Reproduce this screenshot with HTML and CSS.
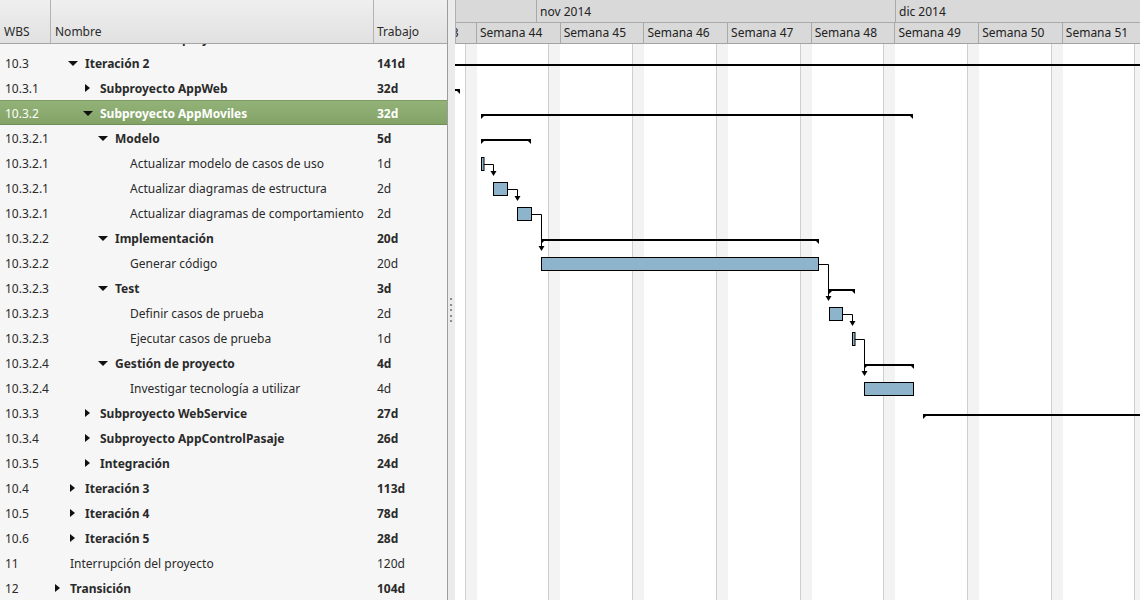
FILE: index.html
```html
<!DOCTYPE html>
<html lang="es">
<head>
<meta charset="utf-8">
<title>Gantt</title>
<link rel="stylesheet" href="styles.css">
</head>
<body>
<div class="app">
  <div class="tree">
    <div class="tree-head">
      <div class="th wbs">WBS</div>
      <div class="th name">Nombre</div>
      <div class="th work">Trabajo</div>
    </div>
    <div class="tree-body">
      <div class="rows">
        <div class="row bold"><span class="c-wbs">10.2.5</span><span class="c-name l3"><span class="tw"><i class="down"></i></span>Gestión de proyecto</span><span class="c-work">6d</span></div>
        <div class="row bold"><span class="c-wbs">10.3</span><span class="c-name l1"><span class="tw"><i class="down"></i></span>Iteración 2</span><span class="c-work">141d</span></div>
        <div class="row bold"><span class="c-wbs">10.3.1</span><span class="c-name l2"><span class="tw"><i class="right"></i></span>Subproyecto AppWeb</span><span class="c-work">32d</span></div>
        <div class="row bold sel"><span class="c-wbs">10.3.2</span><span class="c-name l2"><span class="tw"><i class="down"></i></span>Subproyecto AppMoviles</span><span class="c-work">32d</span></div>
        <div class="row bold"><span class="c-wbs">10.3.2.1</span><span class="c-name l3"><span class="tw"><i class="down"></i></span>Modelo</span><span class="c-work">5d</span></div>
        <div class="row"><span class="c-wbs">10.3.2.1</span><span class="c-name l4"><span class="tw"></span>Actualizar modelo de casos de uso</span><span class="c-work">1d</span></div>
        <div class="row"><span class="c-wbs">10.3.2.1</span><span class="c-name l4"><span class="tw"></span>Actualizar diagramas de estructura</span><span class="c-work">2d</span></div>
        <div class="row"><span class="c-wbs">10.3.2.1</span><span class="c-name l4"><span class="tw"></span>Actualizar diagramas de comportamiento</span><span class="c-work">2d</span></div>
        <div class="row bold"><span class="c-wbs">10.3.2.2</span><span class="c-name l3"><span class="tw"><i class="down"></i></span>Implementación</span><span class="c-work">20d</span></div>
        <div class="row"><span class="c-wbs">10.3.2.2</span><span class="c-name l4"><span class="tw"></span>Generar código</span><span class="c-work">20d</span></div>
        <div class="row bold"><span class="c-wbs">10.3.2.3</span><span class="c-name l3"><span class="tw"><i class="down"></i></span>Test</span><span class="c-work">3d</span></div>
        <div class="row"><span class="c-wbs">10.3.2.3</span><span class="c-name l4"><span class="tw"></span>Definir casos de prueba</span><span class="c-work">2d</span></div>
        <div class="row"><span class="c-wbs">10.3.2.3</span><span class="c-name l4"><span class="tw"></span>Ejecutar casos de prueba</span><span class="c-work">1d</span></div>
        <div class="row bold"><span class="c-wbs">10.3.2.4</span><span class="c-name l3"><span class="tw"><i class="down"></i></span>Gestión de proyecto</span><span class="c-work">4d</span></div>
        <div class="row"><span class="c-wbs">10.3.2.4</span><span class="c-name l4"><span class="tw"></span>Investigar tecnología a utilizar</span><span class="c-work">4d</span></div>
        <div class="row bold"><span class="c-wbs">10.3.3</span><span class="c-name l2"><span class="tw"><i class="right"></i></span>Subproyecto WebService</span><span class="c-work">27d</span></div>
        <div class="row bold"><span class="c-wbs">10.3.4</span><span class="c-name l2"><span class="tw"><i class="right"></i></span>Subproyecto AppControlPasaje</span><span class="c-work">26d</span></div>
        <div class="row bold"><span class="c-wbs">10.3.5</span><span class="c-name l2"><span class="tw"><i class="right"></i></span>Integración</span><span class="c-work">24d</span></div>
        <div class="row bold"><span class="c-wbs">10.4</span><span class="c-name l1"><span class="tw"><i class="right"></i></span>Iteración 3</span><span class="c-work">113d</span></div>
        <div class="row bold"><span class="c-wbs">10.5</span><span class="c-name l1"><span class="tw"><i class="right"></i></span>Iteración 4</span><span class="c-work">78d</span></div>
        <div class="row bold"><span class="c-wbs">10.6</span><span class="c-name l1"><span class="tw"><i class="right"></i></span>Iteración 5</span><span class="c-work">28d</span></div>
        <div class="row"><span class="c-wbs">11</span><span class="c-name l0"><span class="tw"></span>Interrupción del proyecto</span><span class="c-work">120d</span></div>
        <div class="row bold"><span class="c-wbs">12</span><span class="c-name l0"><span class="tw"><i class="right"></i></span>Transición</span><span class="c-work">104d</span></div>
      </div>
    </div>
  </div>
  <div class="splitter">
    <span class="dot"></span><span class="dot"></span><span class="dot"></span><span class="dot"></span><span class="dot"></span>
  </div>
  <div class="gantt">
    <div class="g-head">
      <div class="g-months">
        <div class="g-month m-oct"></div>
        <div class="g-month m-nov">nov 2014</div>
        <div class="g-month m-dic">dic 2014</div>
      </div>
      <div class="g-weeks">
        <div class="g-week">Semana 43</div>
        <div class="g-week">Semana 44</div>
        <div class="g-week">Semana 45</div>
        <div class="g-week">Semana 46</div>
        <div class="g-week">Semana 47</div>
        <div class="g-week">Semana 48</div>
        <div class="g-week">Semana 49</div>
        <div class="g-week">Semana 50</div>
        <div class="g-week">Semana 51</div>
      </div>
    </div>
    <svg class="g-body" width="685" height="556" viewBox="455 44 685 556" xmlns="http://www.w3.org/2000/svg">
      <g class="nonwork">
        <rect x="465" y="44" width="1" height="556" class="wl"/><rect x="466" y="44" width="11" height="556" class="ws"/>
        <rect x="548" y="44" width="1" height="556" class="wl"/><rect x="549" y="44" width="11" height="556" class="ws"/>
        <rect x="632" y="44" width="1" height="556" class="wl"/><rect x="633" y="44" width="11" height="556" class="ws"/>
        <rect x="716" y="44" width="1" height="556" class="wl"/><rect x="717" y="44" width="11" height="556" class="ws"/>
        <rect x="800" y="44" width="1" height="556" class="wl"/><rect x="801" y="44" width="11" height="556" class="ws"/>
        <rect x="883" y="44" width="1" height="556" class="wl"/><rect x="884" y="44" width="11" height="556" class="ws"/>
        <rect x="967" y="44" width="1" height="556" class="wl"/><rect x="968" y="44" width="11" height="556" class="ws"/>
        <rect x="1051" y="44" width="1" height="556" class="wl"/><rect x="1052" y="44" width="11" height="556" class="ws"/>
        <rect x="1134" y="44" width="1" height="556" class="wl"/><rect x="1135" y="44" width="11" height="556" class="ws"/>
      </g>
      <g class="summary">
        <rect x="455" y="64" width="685" height="2"/>
        <rect x="455" y="89" width="5" height="2"/><polygon points="455,89 460,89 460,94"/>
        <rect x="481" y="114" width="432" height="2"/><polygon points="481,114 486,114 481,119"/><polygon points="908,114 913,114 913,119"/>
        <rect x="481" y="139" width="50" height="2"/><polygon points="481,139 486,139 481,144"/><polygon points="526,139 531,139 531,144"/>
        <rect x="541" y="239" width="278" height="2"/><polygon points="541,239 546,239 541,244"/><polygon points="814,239 819,239 819,244"/>
        <rect x="829" y="289" width="26" height="2"/><polygon points="829,289 834,289 829,294"/><polygon points="850,289 855,289 855,294"/>
        <rect x="864" y="364" width="50" height="2"/><polygon points="864,364 869,364 864,369"/><polygon points="909,364 914,364 914,369"/>
        <rect x="923" y="414" width="217" height="2"/><polygon points="923,414 928,414 923,419"/>
      </g>
      <g class="links">
        <path d="M484 164.5 H493.5 V172"/>
        <path d="M508 189.5 H517.5 V197"/>
        <path d="M532 214.5 H541.5 V247"/>
        <path d="M819 264.5 H828.5 V297"/>
        <path d="M843 314.5 H852.5 V322"/>
        <path d="M855 339.5 H864.5 V372"/>
      </g>
      <g class="heads">
        <polygon points="490.5,171 496.5,171 493.5,176"/>
        <polygon points="514.5,196 520.5,196 517.5,201"/>
        <polygon points="538.5,246 544.5,246 541.5,251"/>
        <polygon points="825.5,296 831.5,296 828.5,301"/>
        <polygon points="849.5,321 855.5,321 852.5,326"/>
        <polygon points="861.5,371 867.5,371 864.5,376"/>
      </g>
      <g class="tasks">
        <rect x="481.5" y="157.5" width="2.5" height="13"/>
        <rect x="493.5" y="182.5" width="14" height="13"/>
        <rect x="517.5" y="207.5" width="14" height="13"/>
        <rect x="541.5" y="257.5" width="277" height="13"/>
        <rect x="829.5" y="307.5" width="13" height="13"/>
        <rect x="852.5" y="332.5" width="2.5" height="13"/>
        <rect x="864.5" y="382.5" width="49" height="13"/>
      </g>
    </svg>
  </div>
</div>
</body>
</html>
```

FILE: styles.css
```css
* { box-sizing: border-box; }
html, body { margin: 0; padding: 0; }
body {
  width: 1140px;
  height: 600px;
  overflow: hidden;
  background: #ffffff;
  color: #2a2a2a;
  font-family: "Noto Sans", "Open Sans", "DejaVu Sans", sans-serif;
  font-size: 12px;
}
.app { display: flex; height: 600px; }

/* ---- tree ---- */
.tree {
  width: 448px;
  flex: none;
  display: flex;
  flex-direction: column;
  background: #f6f6f6;
  border-right: 1px solid #9c9c9c;
  overflow: hidden;
}
.tree-head {
  height: 44px;
  flex: none;
  display: grid;
  grid-template-columns: 51px 323px 1fr;
  background: linear-gradient(#efefef, #e1e1e1);
  border-bottom: 1px solid #a6a6a6;
  position: relative;
  z-index: 1;
}
.th {
  display: flex;
  align-items: flex-end;
  padding: 0 0 3px 4px;
  line-height: 17px;
  border-right: 1px solid #b3b3b3;
}
.th.wbs { padding-left: 4px; }
.th.work { border-right: none; padding-left: 3px; }
.tree-body { flex: 1; overflow: hidden; }
.rows { margin-top: -19px; }
.row {
  display: grid;
  grid-template-columns: 51px 323px 1fr;
  height: 25px;
  padding-top: 2px;
  line-height: 23px;
  white-space: nowrap;
}
.row.bold { font-weight: 700; }
.row.bold .c-wbs { font-weight: 400; }
.row.sel {
  background: linear-gradient(#94b379, #82a266);
  color: #ffffff;
  box-shadow: inset 0 1px 0 #7e9b66, inset 0 -1px 0 #6f8d57;
}
.c-wbs { padding-left: 5px; }
.c-work { padding-left: 3px; }
.c-name { display: flex; align-items: center; overflow: hidden; }
.c-name.l0 { padding-left: 4px; }
.c-name.l1 { padding-left: 19px; }
.c-name.l2 { padding-left: 34px; }
.c-name.l3 { padding-left: 49px; }
.c-name.l4 { padding-left: 64px; }
.tw {
  width: 15px;
  flex: none;
  height: 23px;
  display: flex;
  align-items: center;
}
.tw .down {
  display: block;
  width: 0; height: 0;
  margin-left: -2px;
  margin-top: 0;
  border-left: 5px solid transparent;
  border-right: 5px solid transparent;
  border-top: 5px solid #111;
}
.tw .right {
  display: block;
  width: 0; height: 0;
  margin-left: 0;
  margin-top: -1px;
  border-top: 4.5px solid transparent;
  border-bottom: 4.5px solid transparent;
  border-left: 5px solid #111;
}

/* ---- splitter ---- */
.splitter {
  width: 7px;
  flex: none;
  background: #ebebeb;
  display: flex;
  flex-direction: column;
  justify-content: center;
  align-items: flex-start;
  gap: 3.5px;
  padding: 20px 0 0 2px;
}
.dot { width: 2px; height: 2px; background: #8c8c8c; }

/* ---- gantt ---- */
.gantt {
  flex: 1;
  display: flex;
  flex-direction: column;
  overflow: hidden;
  background: #ffffff;
}
.g-head {
  height: 44px;
  flex: none;
  background: #d9d9d9;
  border-bottom: 1px solid #a3a3a3;
  border-left: 1px solid #b0b0b0;
  overflow: hidden;
  color: #222;
}
.g-months {
  height: 23px;
  display: flex;
  border-bottom: 1px solid #a9a9a9;
}
.g-month {
  flex: none;
  padding-top: 2px;
  line-height: 20px;
  padding-left: 3px;
  border-right: 1px solid #a9a9a9;
  white-space: nowrap;
}
.m-oct { width: 81px; }
.m-nov { width: 359px; }
.m-dic { width: 359px; }
.g-weeks {
  height: 20px;
  display: flex;
  margin-left: -62.7px;
}
.g-week {
  flex: none;
  width: 83.7px;
  line-height: 20px;
  padding-left: 3px;
  border-right: 1px solid #a9a9a9;
  white-space: nowrap;
  overflow: hidden;
}
.g-body { display: block; flex: none; }
.wl { fill: #cfcfcf; }
.ws { fill: #f3f3f3; }
.summary rect, .summary polygon { fill: #000; }
.links path { fill: none; stroke: #000; stroke-width: 1; }
.heads polygon { fill: #000; }
.tasks rect { fill: #8db4cb; stroke: #000; stroke-width: 1; }
```
